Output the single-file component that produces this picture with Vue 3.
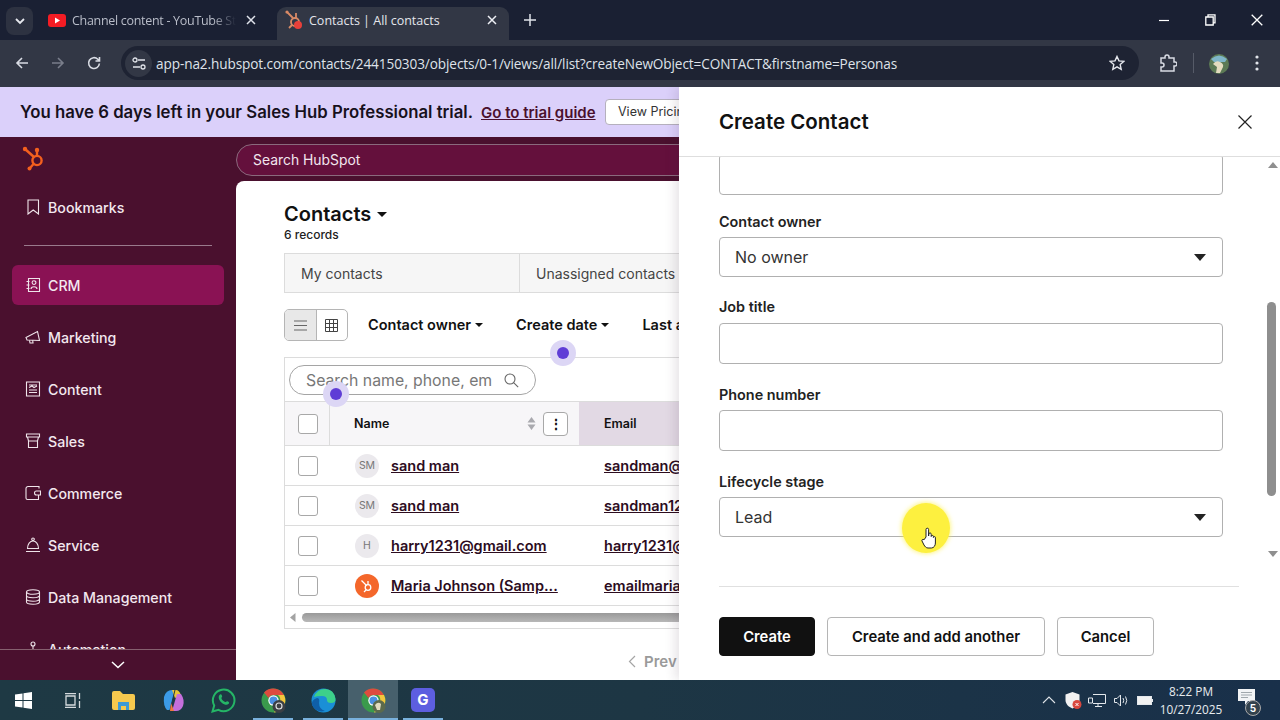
<template>
  <div class="screen">
    <div class="tabstrip">
      <button class="tabList">
        <svg width="10" height="7" viewBox="0 0 10 7"><path d="M1 1l4 4 4-4" fill="none" stroke="#e6e8ee" stroke-width="1.8"/></svg>
      </button>
      <div class="tab">
        <svg class="favicon" width="18" height="13" viewBox="0 0 18 13"><rect width="18" height="13" rx="3" fill="#f41c24"/><path d="M7 3.5v6l5-3z" fill="#fff"/></svg>
        <span class="tabTitle fade">Channel content - YouTube Studio</span>
        <svg class="tabClose" width="10" height="10" viewBox="0 0 10 10"><path d="M1 1l8 8M9 1l-8 8" stroke="#dfe2ea" stroke-width="1.5"/></svg>
      </div>
      <div class="tab active">
        <svg class="favicon" width="18" height="20" viewBox="0 0 18 20">
          <g fill="none" stroke="#d98a66" stroke-width="1.8"><path d="M2 2l6 6M11 3v5"/><circle cx="10" cy="12" r="4"/><path d="M7 15l-3 3"/></g>
          <circle cx="2" cy="2" r="1.6" fill="#d98a66"/><circle cx="13" cy="15" r="4" fill="#e8403a"/>
        </svg>
        <span class="tabTitle">Contacts | All contacts</span>
        <svg class="tabClose" width="10" height="10" viewBox="0 0 10 10"><path d="M1 1l8 8M9 1l-8 8" stroke="#eef0f5" stroke-width="1.5"/></svg>
      </div>
      <svg class="newTab" width="12" height="12" viewBox="0 0 12 12"><path d="M6 0v12M0 6h12" stroke="#dfe2ea" stroke-width="1.5"/></svg>
      <div class="winControls">
        <svg width="11" height="11" viewBox="0 0 11 11"><path d="M0 5.5h10" stroke="#fff" stroke-width="1.2"/></svg>
        <svg width="11" height="12" viewBox="0 0 11 12"><path d="M3 2.5V.8h7v8H8.2M.8 3h7.4v8H.8z" fill="none" stroke="#fff" stroke-width="1.3"/></svg>
        <svg width="12" height="12" viewBox="0 0 12 12"><path d="M.7.7l10.6 10.6M11.3.7L.7 11.3" stroke="#fff" stroke-width="1.3"/></svg>
      </div>
    </div>

    <div class="toolbar">
      <svg class="navIcon" width="14" height="14" viewBox="0 0 14 14"><path d="M13 7H2M7 2L2 7l5 5" fill="none" stroke="#d9dce4" stroke-width="1.6"/></svg>
      <svg class="navIcon" width="14" height="14" viewBox="0 0 14 14"><path d="M1 7h11M7 2l5 5-5 5" fill="none" stroke="#7a7e8b" stroke-width="1.6"/></svg>
      <svg class="navIcon" width="14" height="14" viewBox="0 0 14 14"><path d="M12.4 7.5A5.4 5.4 0 1 1 10.8 3.2L12.5 5M12.5 1v4h-4" fill="none" stroke="#d9dce4" stroke-width="1.6"/></svg>
      <div class="urlBar">
        <span class="siteInfo">
          <svg width="14" height="13" viewBox="0 0 14 13" fill="none" stroke="#e1e4ea" stroke-width="1.3"><path d="M6 3h7M1 10h7"/><circle cx="3" cy="3" r="2"/><circle cx="11" cy="10" r="2"/></svg>
        </span>
        <span class="url">app-na2.hubspot.com/contacts/244150303/objects/0-1/views/all/list?createNewObject=CONTACT&amp;firstname=Personas</span>
        <svg class="star" width="16" height="16" viewBox="0 0 16 16"><path d="M8 1.5l2 4.4 4.8.5-3.600 3.200 1 4.700L8 11.900l-4.200 2.400 1-4.700L1.200 6.400 6 5.900z" fill="none" stroke="#e6e8ee" stroke-width="1.4"/></svg>
      </div>
      <svg class="extIcon" width="18" height="18" viewBox="0 0 18 18"><path d="M2 4h4V3a2 2 0 0 1 4 0v1h5v4h1a2 2 0 0 1 0 4h-1v5H2v-4h1a2 2 0 0 0 0-4H2z" fill="none" stroke="#d9dce4" stroke-width="1.5"/></svg>
      <span class="toolSep"></span>
      <span class="avatar">
        <svg width="20" height="20" viewBox="0 0 20 20"><circle cx="10" cy="10" r="10" fill="#5c7a55"/><path d="M2 5q8-7 16 0l-2 3H5z" fill="#7fb6c9"/><path d="M4 10q3-4 7-2t3 5l-3 6H7l1-6z" fill="#e4dcc0"/></svg>
      </span>
      <svg class="dots" width="4" height="16" viewBox="0 0 4 16"><circle cx="2" cy="2" r="1.600" fill="#e1e4ea"/><circle cx="2" cy="8" r="1.600" fill="#e1e4ea"/><circle cx="2" cy="14" r="1.600" fill="#e1e4ea"/></svg>
    </div>

    <div class="page">
      <div class="banner">
        <span class="bannerText">You have 6 days left in your Sales Hub Professional trial.</span>
        <a class="bannerLink">Go to trial guide</a>
        <span class="pricing">View Pricing</span>
      </div>

      <div class="appTop">
        <svg class="sprocket" width="26" height="26" viewBox="0 0 26 26">
          <g fill="none" stroke="#f4601e" stroke-width="2.400"><circle cx="15" cy="14.500" r="4.600"/><path d="M3 3l9 8M15 5v5M11.500 18l-3.500 4"/></g>
          <circle cx="3" cy="3" r="2.200" fill="#f4601e"/><circle cx="15" cy="4" r="2.200" fill="#f4601e"/><circle cx="7.500" cy="22.500" r="2" fill="#f4601e"/>
        </svg>
        <div class="globalSearch">Search HubSpot</div>
      </div>

      <div class="appBody">
        <aside class="sidebar">
          <div class="navItem bookmarks">
            <svg class="navGlyph" width="16" height="16" viewBox="0 0 16 16"><path d="M3 1h10.500v14L8.200 11 3 15z"/></svg>
            <span>Bookmarks</span>
          </div>
          <div class="navDivider"></div>
          <div class="navList">
            <div v-for="item in navItems" :key="item.label" class="navItem" :class="{ current: item.current }">
              <svg class="navGlyph" width="16" height="16" viewBox="0 0 16 16"><path :d="item.icon"/></svg>
              <span>{{ item.label }}</span>
            </div>
          </div>
          <div class="navFooter">
            <svg width="14" height="8" viewBox="0 0 14 8"><path d="M1 1l6 5.500L13 1" fill="none" stroke="#fff" stroke-width="1.500"/></svg>
          </div>
        </aside>

        <main class="main">
          <div class="mainHead">
            <h1>Contacts<i class="caret big"></i></h1>
            <p>6 records</p>
          </div>

          <div class="viewTabs">
            <div class="viewTab">My contacts</div>
            <div class="viewTab wide">Unassigned contacts</div>
          </div>

          <div class="filters">
            <div class="viewToggle">
              <span class="on">
                <svg width="13" height="11" viewBox="0 0 13 11"><path d="M0 1h13M0 5.500h13M0 10h13" stroke="#666" stroke-width="1.200"/></svg>
              </span>
              <span>
                <svg width="13" height="13" viewBox="0 0 13 13"><path d="M.5.500h12v12H.5zM.5 4.500h12M.5 8.500h12M4.500.500v12M8.500.500v12" fill="none" stroke="#444" stroke-width="1"/></svg>
              </span>
            </div>
            <span class="filter">Contact owner<i class="caret"></i></span>
            <span class="filter">Create date<i class="caret"></i></span>
            <span class="filter">Last activity date<i class="caret"></i></span>
          </div>

          <div class="tableWrap">
            <div class="tableTools">
              <div class="tableSearch">
                <span>Search name, phone, em</span>
                <svg width="15" height="15" viewBox="0 0 15 15"><circle cx="6" cy="6" r="5" fill="none" stroke="#666" stroke-width="1.100"/><path d="M9.600 9.600l4.600 4.600" stroke="#666" stroke-width="1.100"/></svg>
              </div>
            </div>
            <div class="row headRow">
              <div class="checkCell"><span class="check"></span></div>
              <div class="nameCell head">
                <span class="colTitle">Name</span>
                <svg class="sort" width="9" height="15" viewBox="0 0 9 15"><path d="M4.500 1L8.500 6.500H.5zM4.500 14L.5 8.500h8z" fill="#a9a9ae"/></svg>
                <span class="colMenu">⋮</span>
              </div>
              <div class="emailCell head"><span class="colTitle">Email</span></div>
            </div>
            <div v-for="c in contacts" :key="c.name + c.email" class="row">
              <div class="checkCell"><span class="check"></span></div>
              <div class="nameCell">
                <span v-if="c.initials" class="initials">{{ c.initials }}</span>
                <span v-else class="initials orange">
                  <svg width="14" height="14" viewBox="0 0 14 14"><g fill="none" stroke="#fff" stroke-width="1.300"><circle cx="8" cy="8.500" r="2.800"/><path d="M1.500 1.500l5 5M8 2v3.500M6 11l-2 2"/></g></svg>
                </span>
                <a class="link">{{ c.name }}</a>
              </div>
              <div class="emailCell"><a class="link">{{ c.email }}</a></div>
            </div>
            <div class="hScroll">
              <svg width="6" height="9" viewBox="0 0 6 9"><path d="M5.500 0v9L0 4.500z" fill="#a3a3a3"/></svg>
              <span class="hThumb"></span>
            </div>
          </div>

          <div class="pager">
            <svg width="8" height="13" viewBox="0 0 8 13"><path d="M7 1L1.500 6.500 7 12" fill="none" stroke="#a5a5a5" stroke-width="1.200"/></svg>
            <span>Prev</span>
          </div>

          <span class="clickDot dotA"></span>
          <span class="clickDot dotB"></span>
        </main>
      </div>

      <section class="panel">
        <header class="panelHead">
          <h2>Create Contact</h2>
          <svg width="14" height="14" viewBox="0 0 14 14"><path d="M.5.500l13 13M13.500.500l-13 13" stroke="#222" stroke-width="1.200"/></svg>
        </header>
        <div class="panelBody">
          <form class="form">
            <div class="box clipped"></div>
            <div v-for="f in fields" :key="f.label" class="field">
              <label>{{ f.label }}</label>
              <div class="box" :class="{ select: f.value }">
                <template v-if="f.value">
                  <span>{{ f.value }}</span>
                  <svg width="12" height="7" viewBox="0 0 12 7"><path d="M0 0h12L6 7z" fill="#222"/></svg>
                </template>
              </div>
            </div>
          </form>
          <div class="vScroll">
            <svg width="10" height="6" viewBox="0 0 10 6"><path d="M5 0l5 6H0z" fill="#8f8f8f"/></svg>
            <span class="vThumb"></span>
            <svg width="10" height="6" viewBox="0 0 10 6"><path d="M5 6L0 0h10z" fill="#8f8f8f"/></svg>
          </div>
        </div>
        <footer class="panelFoot">
          <button class="btn primary">Create</button>
          <button class="btn another">Create and add another</button>
          <button class="btn cancel">Cancel</button>
        </footer>
      </section>

      <span class="cursorGlow"></span>
      <svg class="hand" width="16" height="22" viewBox="0 0 16 22">
        <path d="M5 10V2.500a1.300 1.300 0 0 1 2.600 0V9l.2-2a1.200 1.200 0 0 1 2.400.3V9.500a1.100 1.100 0 0 1 2.200 0v1a1 1 0 0 1 2 .2V16c0 2.500-1.500 5-4 5H7c-2 0-3-1.500-4-3L1 14c-.6-1.200.9-2.300 2-1.200z" fill="#fff" stroke="#222" stroke-width="1"/>
      </svg>
    </div>

    <div class="taskbar">
      <svg class="startBtn" width="17" height="17" viewBox="0 0 17 17"><path d="M0 2.500L7.500 1.400V8H0zM8.500 1.200L17 0v8H8.500zM0 9h7.500v6.600L0 14.500zM8.500 9H17v8l-8.500-1.200z" fill="#fff"/></svg>
      <svg class="taskView" width="17" height="15" viewBox="0 0 17 15"><path d="M1 .5h11M1 14.500h11M2 3h9v9H2zM15.500 0v6M15.500 8v7" fill="none" stroke="#d5dadd" stroke-width="1.300"/></svg>
      <div v-for="app in taskApps" :key="app.id" class="taskApp" :class="{ running: app.running, focused: app.focused }">
        <svg v-if="app.id === 'files'" width="23" height="19" viewBox="0 0 23 19"><path d="M0 2a2 2 0 0 1 2-2h6l3 3h10a2 2 0 0 1 2 2v12a2 2 0 0 1-2 2H2a2 2 0 0 1-2-2z" fill="#f6c94e"/><path d="M6 11h11v8h-3v-4H9v4H6z" fill="#3d9ad6"/></svg>
        <svg v-else-if="app.id === 'copilot'" width="23" height="23" viewBox="0 0 23 23">
          <path d="M2 8q2-7 8-7h3l-5 20H5q-4-4-3-13z" fill="#3b9be8"/><path d="M10 1h4q3 0 5 5l-6 3z" fill="#e6c43a"/><path d="M15 5h4q4 6 2 12-2 5-7 5h-4z" fill="#c46fdc"/><path d="M8 21l5-20" stroke="#1d3644" stroke-width="1"/><path d="M9 14l3 8H8z" fill="#ef7a3c"/>
        </svg>
        <svg v-else-if="app.id === 'whatsapp'" width="25" height="25" viewBox="0 0 25 25"><path d="M1.500 23.500l1.700-6A10.800 10.800 0 1 1 7.500 21.800z" fill="none" stroke="#25b566" stroke-width="2"/><path d="M8.500 7c1.200-1.300 2-.6 2.600 1 .4 1-.9 1.600-.7 2.300.6 1.600 2 3 3.700 3.700.8.200 1.400-1.200 2.300-.8 1.700.7 2.400 1.500 1 2.800-1.500 1.400-4 .8-6.700-1.300C7.600 12 7 8.700 8.500 7z" fill="#25b566"/></svg>
        <svg v-else-if="app.id === 'chrome' || app.id === 'chrome2'" width="25" height="25" viewBox="0 0 25 25">
          <circle cx="12.500" cy="12.500" r="12" fill="#3a9a4c"/><path d="M12.500.500A12 12 0 0 1 23 7H12.500a5.500 5.500 0 0 0-5 3L3 4.500A12 12 0 0 1 12.500.500z" fill="#dd4b3e"/><path d="M23 7a12 12 0 0 1-10 17.500L18 15a5.500 5.500 0 0 0-1-8z" fill="#f3c63d"/><circle cx="12.500" cy="12.500" r="5.200" fill="#fff"/><circle cx="12.500" cy="12.500" r="4" fill="#4a90e2"/>
          <circle v-if="app.id === 'chrome'" cx="18" cy="18.500" r="6.500" fill="#3b3f44"/><circle v-if="app.id === 'chrome'" cx="18" cy="18" r="3" fill="none" stroke="#ddd" stroke-width="1.200"/>
          <circle v-if="app.id === 'chrome2'" cx="18" cy="18.500" r="6.500" fill="#5c6a4c"/><path v-if="app.id === 'chrome2'" d="M14 17q3-4 6-1l-1 6h-3z" fill="#e2dcc0"/>
        </svg>
        <svg v-else-if="app.id === 'edge'" width="25" height="25" viewBox="0 0 25 25"><circle cx="12.500" cy="12.500" r="12" fill="#1a8fd6"/><path d="M3 9q3-8 11-8 9 0 10.500 10 .3 4-4.500 4-4 0-4-3 0-4-5-4-5 0-8 1z" fill="#3dd08a"/><path d="M8 15q0 6 6 8-9 2-13-6-1-5 5-7 3 0 2 5z" fill="#0f5fa8"/></svg>
        <span v-else class="gridly">G</span>
      </div>
      <div class="tray">
        <span class="trayIcon"><svg width="14" height="8" viewBox="0 0 14 8"><path d="M1 7l6-6 6 6" fill="none" stroke="#dfe4e8" stroke-width="1.100"/></svg></span>
        <span class="trayIcon"><svg width="17" height="19" viewBox="0 0 17 19"><path d="M7.500 1l7 2.500V9c0 4-3 7-7 8.500C3.500 16 .5 13 .5 9V3.500z" fill="#f2f2f2"/><circle cx="12" cy="13.500" r="4.500" fill="#d9473e"/><path d="M10.500 12l3 3M13.500 12l-3 3" stroke="#fff"/></svg></span>
        <span class="trayIcon"><svg width="18" height="15" viewBox="0 0 18 15"><path d="M5 1.500h12.500v9H5M7 13.500h7M10 11v2.500M.5 5h4v5h-4z" fill="none" stroke="#e4e8ec" stroke-width="1"/></svg></span>
        <span class="trayIcon"><svg width="15" height="13" viewBox="0 0 15 13"><path d="M.5 4.500h2.500L6.500 1v11L3 8.500H.5zM9 4q1.500 2.500 0 5M11.500 2.500q2.500 4 0 8" fill="none" stroke="#e4e8ec" stroke-width="1"/></svg></span>
        <span class="trayIcon"><svg width="16" height="9" viewBox="0 0 16 9"><rect x=".5" y=".5" width="14" height="8" fill="#f2f2f2" stroke="#e4e8ec"/><rect x="15" y="3" width="1" height="3" fill="#e4e8ec"/></svg></span>
        <div class="clock"><span>8:22 PM</span><span>10/27/2025</span></div>
        <div class="notify">
          <svg width="17" height="16" viewBox="0 0 17 16"><path d="M0 0h17v12h-7l-3 4v-4H0z" fill="#f2f4f5"/><path d="M3 3.500h11M3 6h11M3 8.500h7" stroke="#8a9499" stroke-width=".8"/></svg>
          <b>5</b>
        </div>
      </div>
    </div>
  </div>
</template>

<script setup>
const navItems = [
  { label: 'CRM', current: true, icon: 'M3.500 1.500h11v13h-11zM1.500 4.500h3M1.500 8h3M1.500 11.500h3M9 7.500a1.900 1.900 0 1 0 0-3.800 1.900 1.900 0 0 0 0 3.800zM6 12c0-3 6-3 6 0' },
  { label: 'Marketing', icon: 'M1 8.500L12.500 2.500 14.500 11.500 2 11zM4.500 11.300l.5 2.700h3l-.3-2.500' },
  { label: 'Content', icon: 'M1.500 1h13v14h-13zM4 4h8M4 6.500l3-1.500 2 1.500 3-1.500M4 9h8M4 11.500h8' },
  { label: 'Sales', icon: 'M1.500 1h13v3h-13zM2.500 4l1 4h9l1-4M3.500 8v6.500h9V8' },
  { label: 'Commerce', icon: 'M14 3.500V1.500H3a2 2 0 0 0-2 2V13a1.500 1.500 0 0 0 1.500 1.500h11V10M15.500 6h-4a2 2 0 0 0 0 4h4z' },
  { label: 'Service', icon: 'M8 1a1.300 1.300 0 0 0 0 2.600A1.300 1.300 0 0 0 8 1zM2.500 11.500c0-4.500 2.500-7.500 5.500-7.500s5.500 3 5.500 7.500zM1 14.500h14' },
  { label: 'Data Management', icon: 'M1.500 3c0-3 13-3 13 0s-13 3-13 0zM1.500 3v10c0 3 13 3 13 0V3M1.500 6.500c0 3 13 3 13 0M1.500 10c0 3 13 3 13 0' },
  { label: 'Automation', icon: 'M8 1a2 2 0 1 0 0 4 2 2 0 0 0 0-4zM8 5v5M3 10h10v5H3z' }
]

const contacts = [
  { initials: 'SM', name: 'sand man', email: 'sandman@gmail.com' },
  { initials: 'SM', name: 'sand man', email: 'sandman1231@gmail.com' },
  { initials: 'H', name: 'harry1231@gmail.com', email: 'harry1231@gmail.com' },
  { initials: '', name: 'Maria Johnson (Samp...', email: 'emailmaria@hubspot.com' }
]

const fields = [
  { label: 'Contact owner', value: 'No owner' },
  { label: 'Job title' },
  { label: 'Phone number' },
  { label: 'Lifecycle stage', value: 'Lead' }
]

const taskApps = [
  { id: 'files' },
  { id: 'copilot' },
  { id: 'whatsapp' },
  { id: 'chrome', running: true },
  { id: 'edge', running: true },
  { id: 'chrome2', running: true, focused: true },
  { id: 'gridly', running: true }
]
</script>

<style>
html, body {
  margin: 0;
  background: #1b2032;
}
</style>

<style scoped>
* {
  box-sizing: border-box;
}

.screen {
  width: 1280px;
  height: 720px;
  overflow: hidden;
  display: flex;
  flex-direction: column;
  font-family: Inter, "Liberation Sans", sans-serif;
  color: #111;
}

/* 瀏覽器分頁列 */
.tabstrip {
  height: 40px;
  flex: none;
  display: flex;
  align-items: flex-end;
  padding-left: 6px;
  background: #1a2033;
  font-family: "Open Sans", sans-serif;
}

.tabList {
  width: 27px;
  height: 28px;
  margin-bottom: 5px;
  padding: 0;
  border: none;
  border-radius: 8px;
  background: #2d3241;
  display: flex;
  align-items: center;
  justify-content: center;
}

.tab {
  width: 232px;
  height: 33px;
  display: flex;
  align-items: center;
  padding: 0 9px 7px 15px;
  color: #b9bdc9;
  font-size: 12.5px;
}

.tab.active {
  margin-left: 12px;
  padding-left: 8px;
  padding-right: 12px;
  width: 232px;
  border-radius: 9px 9px 0 0;
  background: #323745;
  color: #e4e6ec;
}

.favicon {
  flex: none;
  margin-right: 6px;
}

.tabTitle {
  flex: 1;
  white-space: nowrap;
  overflow: hidden;
}

.fade {
  letter-spacing: -.3px;
  -webkit-mask-image: linear-gradient(90deg, #000 86%, transparent);
  mask-image: linear-gradient(90deg, #000 86%, transparent);
}

.tabClose {
  flex: none;
  margin-left: 10px;
}

.newTab {
  margin: 0 0 14px 15px;
}

.winControls {
  margin-left: auto;
  align-self: center;
  display: flex;
  align-items: center;
  gap: 35px;
  padding-right: 17px;
}

/* 網址列 */
.toolbar {
  height: 47px;
  flex: none;
  display: flex;
  align-items: center;
  padding: 0 15px 1px;
  background: #323745;
}

.navIcon {
  flex: none;
  margin-right: 22px;
}

.urlBar {
  width: 1018px;
  height: 34px;
  margin-left: -2px;
  border-radius: 17px;
  background: #1e2333;
  display: flex;
  align-items: center;
  padding: 0 14px 0 4px;
}

.siteInfo {
  width: 27px;
  height: 27px;
  border-radius: 50%;
  background: #323745;
  display: flex;
  align-items: center;
  justify-content: center;
  margin-right: 4px;
}

.url {
  flex: 1;
  color: #dfe2e9;
  font-size: 13.6px;
  font-family: "Open Sans", sans-serif;
  letter-spacing: -.1px;
  white-space: nowrap;
}

.extIcon {
  margin-left: 20px;
  flex: none;
}

.toolSep {
  width: 1px;
  height: 20px;
  background: #565b68;
  margin: 0 15px 0 16px;
}

.avatar {
  width: 20px;
  height: 20px;
  margin-right: 26px;
  margin-top: 1px;
  display: block;
}

/* 頁面 */
.page {
  position: relative;
  height: 593px;
  flex: none;
  display: flex;
  flex-direction: column;
  overflow: hidden;
}

.banner {
  height: 50px;
  flex: none;
  display: flex;
  align-items: center;
  padding-left: 20px;
  background: #dbd0fa;
  white-space: nowrap;
}

.bannerText {
  font-size: 16.75px;
  font-weight: 600;
  color: #17101c;
  width: 461px;
}

.bannerLink {
  width: 124px;
  font-size: 15px;
  font-weight: 600;
  color: #4a102e;
  text-decoration: underline;
}

.pricing {
  height: 26px;
  padding: 0 12px;
  border: 1px solid #b5b0bd;
  border-radius: 4px;
  background: #fff;
  font-size: 12.5px;
  line-height: 24px;
  color: #333;
}

.appTop {
  height: 44px;
  flex: none;
  display: flex;
  align-items: center;
  background: #4a102e;
  padding-left: 22px;
}

.sprocket {
  margin-right: 188px;
  flex: none;
}

.globalSearch {
  width: 600px;
  height: 32px;
  margin-top: 1px;
  padding-left: 16px;
  border: 1px solid #8a6a7d;
  border-radius: 16px;
  background: #64103c;
  color: #f2e6ee;
  font-size: 13.9px;
  line-height: 30px;
}

.appBody {
  flex: 1;
  min-height: 0;
  display: flex;
  background: #4a102e;
}

/* 側邊欄 */
.sidebar {
  width: 236px;
  flex: none;
  display: flex;
  flex-direction: column;
  color: #f3e8ef;
  font-size: 14.2px;
}

.navItem {
  height: 40px;
  flex: none;
  margin: 0 12px 12px;
  padding-left: 13px;
  display: flex;
  align-items: center;
  gap: 7px;
  border-radius: 6px;
  font-weight: 500;
}

.navItem.bookmarks {
  margin-top: 6px;
  margin-bottom: 0;
}

.navItem.current {
  background: #8a1254;
}

.navGlyph {
  flex: none;
  fill: none;
  stroke: #efe4ea;
  stroke-width: 1.100;
}

.navDivider {
  height: 1px;
  flex: none;
  margin: 18px 24px 19px;
  background: #9a7a8c;
}

.navList {
  flex: 1;
  min-height: 0;
  overflow: hidden;
}

.navFooter {
  height: 31px;
  flex: none;
  display: flex;
  align-items: center;
  justify-content: center;
  border-top: 1px solid #86606f;
}

/* 主內容 */
.main {
  position: relative;
  flex: 1;
  min-width: 0;
  padding: 20px 0 0 48px;
  background: #fff;
  border-radius: 8px 0 0 0;
  overflow: hidden;
}

.mainHead h1 {
  margin: 0;
  font-size: 20px;
  line-height: 26px;
  font-weight: 600;
  display: flex;
  align-items: center;
}

.mainHead p {
  margin: 0;
  font-size: 12px;
  line-height: 16px;
  font-weight: 500;
  color: #222;
}

.caret {
  display: inline-block;
  margin-left: 4px;
  border: 4px solid transparent;
  border-top: 4px solid #111;
  border-bottom: none;
}

.caret.big {
  border-width: 5px 5.500px 0;
  margin-left: 6px;
}

.viewTabs {
  width: 395px;
  overflow: hidden;
  display: flex;
  margin-top: 10px;
}

.viewTab {
  width: 235px;
  height: 40px;
  flex: none;
  padding-left: 16px;
  border: 1px solid #dcdcdc;
  border-right: none;
  background: #f6f6f6;
  color: #444;
  font-size: 14px;
  line-height: 39px;
  white-space: nowrap;
}

.viewTab.wide {
  width: 300px;
}

.filters {
  height: 32px;
  width: 395px;
  overflow: hidden;
  margin-top: 16px;
  display: flex;
  align-items: center;
  white-space: nowrap;
}

.viewToggle {
  width: 64px;
  height: 32px;
  flex: none;
  display: flex;
  border: 1px solid #b5b5b5;
  border-radius: 5px;
  overflow: hidden;
  margin-right: 20px;
}

.viewToggle span {
  flex: 1;
  display: flex;
  align-items: center;
  justify-content: center;
}

.viewToggle .on {
  background: #e8e8e8;
  border-right: 1px solid #b5b5b5;
}

.filter {
  margin-right: 33px;
  padding-bottom: 1px;
  font-size: 14.5px;
  font-weight: 600;
  color: #111;
  display: flex;
  align-items: center;
}

.tableWrap {
  width: 395px;
  height: 272px;
  margin-top: 16px;
  overflow: hidden;
  border: 1px solid #dcdcdc;
  border-right: none;
}

.tableTools {
  height: 43px;
  padding: 7px 0 0 4px;
}

.tableSearch {
  width: 247px;
  height: 30px;
  padding: 0 16px;
  display: flex;
  align-items: center;
  justify-content: space-between;
  border: 1px solid #a5a5a5;
  border-radius: 15px;
  font-size: 15.800px;
  color: #777;
  white-space: nowrap;
}

.tableSearch span {
  width: 190px;
  overflow: hidden;
  margin-right: 8px;
}

.tableSearch svg {
  flex: none;
}

.row {
  height: 40px;
  display: flex;
  border-top: 1px solid #dcdcdc;
  font-size: 14px;
}

.headRow {
  height: 44px;
  background: #f7f6f8;
}

.checkCell {
  width: 45px;
  flex: none;
  display: flex;
  align-items: center;
  justify-content: center;
}

.headRow .checkCell {
  padding-left: 1px;
  border-right: 1px solid #dcdcdc;
}

.check {
  width: 20px;
  height: 20px;
  border: 1px solid #a8a8a8;
  border-radius: 3px;
  background: #fff;
}

.nameCell {
  width: 249px;
  flex: none;
  padding-left: 25px;
  display: flex;
  align-items: center;
}

.nameCell.head {
  padding-left: 24px;
}

.colTitle {
  font-size: 12.500px;
  font-weight: 600;
}

.sort {
  margin-left: auto;
}

.colMenu {
  width: 25px;
  height: 24px;
  margin: 0 11px 0 7px;
  border: 1px solid #a8a8a8;
  border-radius: 4px;
  background: #fff;
  text-align: center;
  line-height: 22px;
  font-size: 14px;
  font-weight: 700;
}

.emailCell {
  flex: 1;
  min-width: 0;
  padding-left: 25px;
  display: flex;
  align-items: center;
  overflow: hidden;
  white-space: nowrap;
}

.emailCell.head {
  background: #e2d9e4;
}

.initials {
  width: 24px;
  height: 24px;
  flex: none;
  margin-right: 12px;
  border-radius: 50%;
  background: #ebe9ed;
  color: #777;
  font-size: 10.500px;
  line-height: 24px;
  text-align: center;
}

.initials.orange {
  background: #f4672b;
  display: flex;
  align-items: center;
  justify-content: center;
}

.link {
  font-size: 14.500px;
  font-weight: 600;
  color: #2c0c1e;
  text-decoration: underline;
  white-space: nowrap;
}

.hScroll {
  height: 23px;
  padding-left: 5px;
  display: flex;
  align-items: center;
  gap: 6px;
  border-top: 1px solid #dcdcdc;
}

.hThumb {
  flex: 1;
  height: 9px;
  border-radius: 5px 0 0 5px;
  background: linear-gradient(#999, #b8b8b8);
}

.pager {
  width: 50px;
  margin: 23px 0 0 344px;
  overflow: hidden;
  display: flex;
  align-items: center;
  gap: 8px;
  color: #9a9a9a;
  font-size: 15px;
  font-weight: 600;
}

.pager svg {
  flex: none;
}

.clickDot {
  position: absolute;
  width: 12px;
  height: 12px;
  border-radius: 50%;
  background: #5f3dd6;
  box-shadow: 0 0 0 7px #dcd6f5;
}

.dotA {
  left: 321px;
  top: 166px;
}

.dotB {
  left: 94px;
  top: 207px;
}

/* 建立聯絡人面板 */
.panel {
  position: absolute;
  top: 0;
  left: 679px;
  width: 601px;
  height: 593px;
  display: flex;
  flex-direction: column;
  background: #fff;
  box-shadow: -4px 0 10px rgba(60, 30, 60, .12);
}

.panelHead {
  height: 70px;
  flex: none;
  padding: 0 28px 0 40px;
  display: flex;
  align-items: center;
  justify-content: space-between;
  border-bottom: 1px solid #dedede;
}

.panelHead h2 {
  margin: 0;
  font-size: 20.5px;
  font-weight: 600;
}

.panelBody {
  height: 413px;
  flex: none;
  display: flex;
  overflow: hidden;
}

.form {
  width: 544px;
  padding-left: 40px;
  margin-top: -3px;
}

.box {
  width: 504px;
  height: 41px;
  border: 1px solid #b0b0b0;
  border-radius: 4px;
  background: #fff;
}

.box.clipped {
  margin-bottom: -4px;
}

.box.select {
  height: 40px;
  padding: 0 16px 0 15px;
  display: flex;
  align-items: center;
  justify-content: space-between;
  font-size: 16px;
  color: #333;
}

.field {
  margin-top: 21px;
}

.field label {
  display: block;
  height: 20px;
  margin-bottom: 5px;
  font-size: 14.400px;
  line-height: 20px;
  font-weight: 600;
  color: #222;
}

.field:nth-child(3) label {
  margin-top: -1px;
  margin-bottom: 6px;
}

.vScroll {
  position: relative;
  width: 13px;
  margin-left: 43px;
  padding: 5px 0 13px;
  display: flex;
  flex-direction: column;
  align-items: center;
  justify-content: space-between;
}

.vThumb {
  position: absolute;
  top: 145px;
  left: 1px;
  width: 9px;
  height: 194px;
  border-radius: 5px;
  background: #8e8e8e;
}

.panelFoot {
  margin: 16px 41px 0 40px;
  padding-top: 30px;
  border-top: 1px solid #e0e0e0;
  display: flex;
  gap: 12px;
}

.btn {
  height: 39px;
  padding: 0;
  border: 1px solid #b5b5b5;
  border-radius: 4px;
  background: #fff;
  font-family: inherit;
  font-size: 14.800px;
  font-weight: 600;
  color: #111;
}

.btn.primary {
  width: 96px;
  border-color: #111;
  background: #111;
  color: #fff;
}

.btn.another {
  width: 218px;
}

.btn.cancel {
  width: 97px;
}

.cursorGlow {
  position: absolute;
  left: 902px;
  top: 416px;
  width: 48px;
  height: 50px;
  border-radius: 50%;
  background: #fdf03f;
  box-shadow: 0 0 4px 1px rgba(253, 240, 63, .6);
}

.hand {
  position: absolute;
  left: 921px;
  top: 440px;
}

/* 工作列 */
.taskbar {
  position: relative;
  height: 40px;
  flex: none;
  display: flex;
  align-items: center;
  padding-left: 15px;
  background: linear-gradient(90deg, #1e3944, #1d3644 50%, #19304a);
}

.startBtn {
  flex: none;
}

.taskView {
  flex: none;
  margin: 0 0 0 32px;
}

.taskApp {
  position: relative;
  width: 50px;
  height: 40px;
  flex: none;
  display: flex;
  align-items: center;
  justify-content: center;
}

.taskApp:first-of-type {
  margin-left: 17px;
}

.taskApp.running::after {
  content: "";
  position: absolute;
  left: 5px;
  right: 5px;
  bottom: 0;
  height: 2px;
  background: #79b1dd;
}

.taskApp.focused {
  background: #47606c;
}

.taskApp.focused::after {
  left: 0;
  right: 0;
}

.gridly {
  width: 24px;
  height: 24px;
  border-radius: 5px;
  background: #5d5ee0;
  color: #fff;
  font-size: 15px;
  font-weight: 700;
  line-height: 24px;
  text-align: center;
}

.tray {
  margin-left: auto;
  padding-right: 20px;
  display: flex;
  align-items: center;
}

.trayIcon {
  width: 24px;
  display: flex;
  justify-content: center;
}

.clock {
  width: 70px;
  margin: 0 12px 0 -1px;
  display: flex;
  flex-direction: column;
  align-items: center;
  gap: 1px;
  color: #e8ecef;
  font-size: 11.8px;
  line-height: 17px;
  font-family: "Open Sans", sans-serif;
  white-space: nowrap;
}

.notify {
  position: relative;
  width: 22px;
  height: 22px;
}

.notify b {
  position: absolute;
  right: -1px;
  bottom: -5px;
  width: 16px;
  height: 16px;
  border: 1px solid #aaa;
  border-radius: 50%;
  background: #33424d;
  color: #fff;
  font-size: 10px;
  line-height: 14px;
  text-align: center;
}
</style>
